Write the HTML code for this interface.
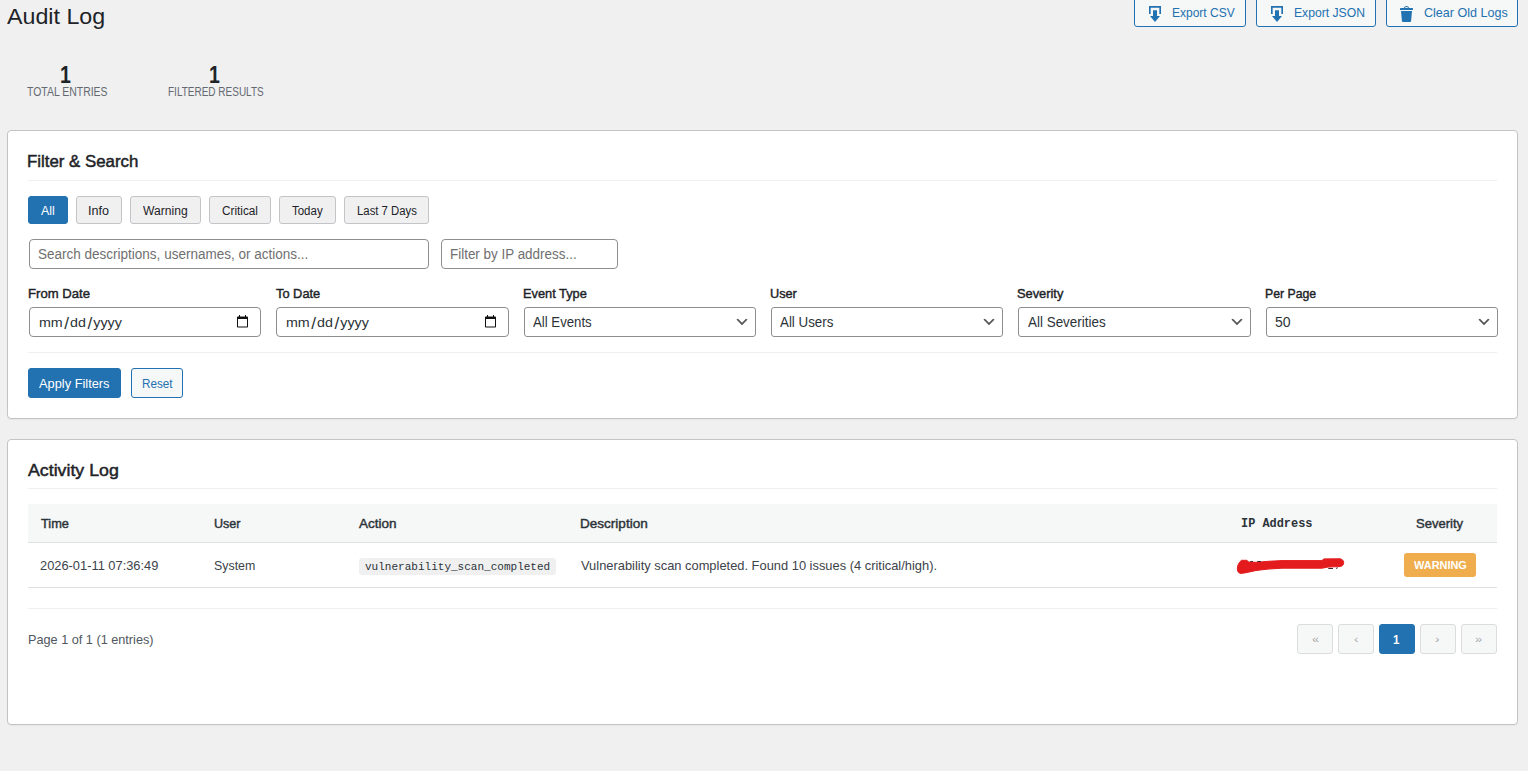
<!DOCTYPE html>
<html lang="en">
<head>
<meta charset="utf-8">
<title>Audit Log</title>
<style>
*{box-sizing:border-box;margin:0;padding:0}
html,body{width:1528px;height:771px;overflow:hidden;background:#f0f0f1}
body{font-family:'Liberation Sans',sans-serif;font-size:13px;color:#3c434a;position:relative}
a{text-decoration:none}
.abs,.t,.card,.hr,.btn,.qbtn,.inp,.pg,.thead,.row,.chip,.badge{position:absolute;display:block}
.t{white-space:pre;line-height:30px;height:30px;font-weight:400;font-style:normal;font-family:'Liberation Sans',sans-serif;transform-origin:0 50%}
.t i.sl{font-style:normal;font-size:16px;line-height:10px;position:relative;top:1.8px;margin:0 1px 0 1.4px}
.t.m{font-family:'Liberation Mono',monospace}
.ic{display:block;fill:#2271b1}
.card{background:#fff;border:1px solid #c3c4c7;border-radius:4px;box-shadow:0 1px 1px rgba(0,0,0,.04)}
.hr{background:#f0f0f1}
.btn{border:1px solid #2271b1;border-radius:3px}
.btn.pri{background:#2271b1}
.btn.sec{background:#f6f7f7}
.qbtn{border:1px solid #c3c4c7;border-radius:3px;background:#f0f0f1}
.qbtn.on{background:#2271b1;border-color:#2271b1}
.inp{border:1px solid #8c8e91;border-radius:4px;background:#fff}
.inp.sel{border-radius:3px}
.thead{background:#f6f7f7;border-bottom:1px solid #dfe0e1}
.row{border-bottom:1px solid #dfe0e1}
.chip{background:#f0f0f1;border-radius:3px}
.badge{background:#f0ad4e;border-radius:3px}
.pg{border:1px solid #dcdcde;border-radius:3px;background:#f6f7f7}
.pg.cur{background:#2271b1;border-color:#2271b1}
</style>
</head>
<body>
<h1 class="t" style="left:7.45px;top:1.70px;font-size:22px;color:#1d2327;transform:scaleX(1.0564)">Audit Log</h1>
<div class="abs" style="left:1134px;top:-3px;width:384px;height:30px;">
  <a class="btn sec" style="left:0px;top:0px;width:112px;height:30px;">
    <span class="abs" style="left:10px;top:6px"><svg class="ic" viewBox="0 0 20 20" width="20" height="20"><path d="M14.35 3.650V10H16V2H4v8h1.650V3.650h8.700zM12 6.150V12h3l-5 6-5-6h3V6.150h4z"/></svg></span>
    <span class="t" style="left:37.05px;top:0.30px;font-size:13px;color:#2271b1;transform:scaleX(0.9234)">Export CSV</span>
  </a>
  <a class="btn sec" style="left:122px;top:0px;width:120px;height:30px;">
    <span class="abs" style="left:10px;top:6px"><svg class="ic" viewBox="0 0 20 20" width="20" height="20"><path d="M14.35 3.650V10H16V2H4v8h1.650V3.650h8.700zM12 6.150V12h3l-5 6-5-6h3V6.150h4z"/></svg></span>
    <span class="t" style="left:36.54px;top:0.30px;font-size:13px;color:#2271b1;transform:scaleX(0.9355)">Export JSON</span>
  </a>
  <a class="btn sec" style="left:252px;top:0px;width:132px;height:30px;">
    <span class="abs" style="left:10px;top:6px"><svg class="ic" viewBox="0 0 20 20" width="20" height="20"><path d="M12 4h3c.6 0 1 .4 1 1v1H3V5c0-.6.5-1 1-1h3c.2-1.100 1.300-2 2.500-2s2.300.9 2.500 2zM8 4h3c-.2-.6-.9-1-1.500-1S8.200 3.400 8 4zM4 7h11l-.9 10.100c0 .5-.5.9-1 .9H5.900c-.5 0-.9-.4-1-.9L4 7z"/></svg></span>
    <span class="t" style="left:36.68px;top:0.30px;font-size:13px;color:#2271b1;transform:scaleX(0.9647)">Clear Old Logs</span>
  </a>
</div>
<div class="abs" style="left:27px;top:62px;width:81px;height:40px;">
  <b class="t" style="left:33.22px;top:-2.30px;font-size:23px;font-weight:700;color:#1d2327;transform:scaleX(0.8488)">1</b>
  <span class="t" style="left:0.05px;top:15.20px;font-size:12px;color:#646970;transform:scaleX(0.8712)">TOTAL ENTRIES</span>
</div>
<div class="abs" style="left:167px;top:62px;width:97px;height:40px;">
  <b class="t" style="left:41.52px;top:-2.30px;font-size:23px;font-weight:700;color:#1d2327;transform:scaleX(0.8488)">1</b>
  <span class="t" style="left:0.78px;top:15.20px;font-size:12px;color:#646970;transform:scaleX(0.8326)">FILTERED RESULTS</span>
</div>
<div class="card" style="left:7px;top:130px;width:1511px;height:289px;">
  <h2 class="t" style="left:19.35px;top:16.20px;font-size:17px;-webkit-text-stroke:0.48px #1d2327;color:#1d2327;transform:scaleX(0.9904)">Filter &amp; Search</h2>
  <div class="hr" style="left:20px;top:49px;width:1469px;height:1px;">
  </div>
  <div class="abs" style="left:20px;top:65px;width:401px;height:28px;">
    <a class="qbtn on" style="left:0px;top:0px;width:40px;height:28px;">
      <span class="t" style="left:12.25px;top:-1.20px;font-size:12px;color:#fff;transform:scaleX(1.0343)">All</span>
    </a>
    <a class="qbtn" style="left:48.2px;top:0px;width:45.7px;height:28px;">
      <span class="t" style="left:11.18px;top:-1.20px;font-size:12px;color:#1d2327;transform:scaleX(1.0482)">Info</span>
    </a>
    <a class="qbtn" style="left:102.2px;top:0px;width:70.5px;height:28px;">
      <span class="t" style="left:12.30px;top:-1.20px;font-size:12px;color:#1d2327;transform:scaleX(1.0087)">Warning</span>
    </a>
    <a class="qbtn" style="left:181px;top:0px;width:61.5px;height:28px;">
      <span class="t" style="left:12.01px;top:-1.20px;font-size:12px;color:#1d2327;transform:scaleX(0.9815)">Critical</span>
    </a>
    <a class="qbtn" style="left:251.3px;top:0px;width:56.4px;height:28px;">
      <span class="t" style="left:12.04px;top:-1.20px;font-size:12px;color:#1d2327;transform:scaleX(0.9566)">Today</span>
    </a>
    <a class="qbtn" style="left:316.3px;top:0px;width:84.5px;height:28px;">
      <span class="t" style="left:11.38px;top:-1.20px;font-size:12px;color:#1d2327;transform:scaleX(0.9461)">Last 7 Days</span>
    </a>
  </div>
  <div class="inp" style="left:21px;top:108px;width:400px;height:30px;">
    <span class="t" style="left:7.82px;top:-1.00px;font-size:14px;color:#6f6f6f;transform:scaleX(0.9648)">Search descriptions, usernames, or actions...</span>
  </div>
  <div class="inp" style="left:433px;top:108px;width:177px;height:30px;">
    <span class="t" style="left:7.76px;top:-1.00px;font-size:14px;color:#6f6f6f;transform:scaleX(0.9591)">Filter by IP address...</span>
  </div>
  <label class="t" style="left:19.75px;top:148.10px;font-size:13px;-webkit-text-stroke:0.42px #1d2327;color:#1d2327;transform:scaleX(1.0086)">From Date</label>
  <label class="t" style="left:268.30px;top:148.10px;font-size:13px;-webkit-text-stroke:0.42px #1d2327;color:#1d2327;transform:scaleX(0.9873)">To Date</label>
  <label class="t" style="left:514.77px;top:148.10px;font-size:13px;-webkit-text-stroke:0.42px #1d2327;color:#1d2327;transform:scaleX(0.9840)">Event Type</label>
  <label class="t" style="left:761.82px;top:148.10px;font-size:13px;-webkit-text-stroke:0.42px #1d2327;color:#1d2327;transform:scaleX(0.9782)">User</label>
  <label class="t" style="left:1009.18px;top:148.10px;font-size:13px;-webkit-text-stroke:0.42px #1d2327;color:#1d2327;transform:scaleX(0.9869)">Severity</label>
  <label class="t" style="left:1256.70px;top:148.10px;font-size:13px;-webkit-text-stroke:0.42px #1d2327;color:#1d2327;transform:scaleX(0.9443)">Per Page</label>
  <div class="inp" style="left:21px;top:176px;width:232px;height:30px;">
    <span class="t" style="left:8.91px;top:0.00px;font-size:13.3px;color:#2c3338;transform:scaleX(1.0719)">mm<i class="sl">/</i>dd<i class="sl">/</i>yyyy</span>
    <svg class="abs" style="left:206.4px;top:6.2px" viewBox="0 0 13 15" width="13" height="15"><path fill="#111" d="M3 1h1v1.500h5V1h1v1.500h1c.55 0 1 .45 1 1v9c0 .55-.45 1-1 1H2c-.55 0-1-.45-1-1v-9c0-.55.45-1 1-1h1V1zm8 4.100H2v7.400h9V5.100z"/></svg>
  </div>
  <div class="inp" style="left:268px;top:176px;width:233px;height:30px;">
    <span class="t" style="left:9.21px;top:0.00px;font-size:13.3px;color:#2c3338;transform:scaleX(1.0719)">mm<i class="sl">/</i>dd<i class="sl">/</i>yyyy</span>
    <svg class="abs" style="left:207.4px;top:6.2px" viewBox="0 0 13 15" width="13" height="15"><path fill="#111" d="M3 1h1v1.500h5V1h1v1.500h1c.55 0 1 .45 1 1v9c0 .55-.45 1-1 1H2c-.55 0-1-.45-1-1v-9c0-.55.45-1 1-1h1V1zm8 4.100H2v7.400h9V5.100z"/></svg>
  </div>
  <div class="inp sel" style="left:516px;top:176px;width:232px;height:30px;">
    <span class="t" style="left:8.25px;top:-1.00px;font-size:14px;color:#2c3338;transform:scaleX(0.9426)">All Events</span>
    <svg class="abs" style="left:209px;top:5.6px" viewBox="0 0 20 20" width="16" height="16"><path fill="#555" d="M5 6l5 5 5-5 2 1-7 7-7-7 2-1z"/></svg>
  </div>
  <div class="inp sel" style="left:763px;top:176px;width:232px;height:30px;">
    <span class="t" style="left:8.25px;top:-1.00px;font-size:14px;color:#2c3338;transform:scaleX(0.9530)">All Users</span>
    <svg class="abs" style="left:209px;top:5.6px" viewBox="0 0 20 20" width="16" height="16"><path fill="#555" d="M5 6l5 5 5-5 2 1-7 7-7-7 2-1z"/></svg>
  </div>
  <div class="inp sel" style="left:1010px;top:176px;width:233px;height:30px;">
    <span class="t" style="left:8.85px;top:-1.00px;font-size:14px;color:#2c3338;transform:scaleX(0.9602)">All Severities</span>
    <svg class="abs" style="left:210px;top:5.6px" viewBox="0 0 20 20" width="16" height="16"><path fill="#555" d="M5 6l5 5 5-5 2 1-7 7-7-7 2-1z"/></svg>
  </div>
  <div class="inp sel" style="left:1258px;top:176px;width:232px;height:30px;">
    <span class="t" style="left:7.72px;top:-1.00px;font-size:14px;color:#2c3338;transform:scaleX(1.0018)">50</span>
    <svg class="abs" style="left:209px;top:5.6px" viewBox="0 0 20 20" width="16" height="16"><path fill="#555" d="M5 6l5 5 5-5 2 1-7 7-7-7 2-1z"/></svg>
  </div>
  <div class="hr" style="left:20px;top:221px;width:1469px;height:1px;">
  </div>
  <a class="btn pri" style="left:20px;top:237px;width:93px;height:30px;">
    <span class="t" style="left:10.35px;top:0.00px;font-size:13px;color:#fff;transform:scaleX(0.9860)">Apply Filters</span>
  </a>
  <a class="btn sec" style="left:123px;top:237px;width:52px;height:30px;">
    <span class="t" style="left:9.67px;top:0.00px;font-size:13px;color:#2271b1;transform:scaleX(0.9016)">Reset</span>
  </a>
</div>
<div class="card" style="left:7px;top:439px;width:1511px;height:286px;">
  <h2 class="t" style="left:20.16px;top:16.10px;font-size:17px;-webkit-text-stroke:0.48px #1d2327;color:#1d2327;transform:scaleX(1.0443)">Activity Log</h2>
  <div class="hr" style="left:20px;top:48px;width:1469px;height:1px;">
  </div>
  <div class="thead" style="left:20px;top:64px;width:1469px;height:39px;">
    <span class="t" style="left:12.80px;top:4.80px;font-size:13px;-webkit-text-stroke:0.42px #2c3338;color:#2c3338;transform:scaleX(0.9850)">Time</span>
    <span class="t" style="left:185.72px;top:4.80px;font-size:13px;-webkit-text-stroke:0.42px #2c3338;color:#2c3338;transform:scaleX(0.9671)">User</span>
    <span class="t" style="left:330.83px;top:4.80px;font-size:13px;-webkit-text-stroke:0.42px #2c3338;color:#2c3338;transform:scaleX(1.0397)">Action</span>
    <span class="t" style="left:552.42px;top:4.80px;font-size:13px;-webkit-text-stroke:0.42px #2c3338;color:#2c3338;transform:scaleX(1.0414)">Description</span>
    <span class="t m" style="left:1212.99px;top:5.20px;font-size:12px;font-weight:700;color:#2c3338;transform:scaleX(0.9917)">IP Address</span>
    <span class="t" style="left:1387.98px;top:4.80px;font-size:13px;-webkit-text-stroke:0.42px #2c3338;color:#2c3338;transform:scaleX(1.0019)">Severity</span>
  </div>
  <div class="row" style="left:20px;top:103px;width:1469px;height:45px;">
    <span class="t" style="left:11.70px;top:8.00px;font-size:13px;color:#3c434a;transform:scaleX(0.9886)">2026-01-11 07:36:49</span>
    <span class="t" style="left:185.58px;top:8.00px;font-size:13px;color:#3c434a;transform:scaleX(0.9520)">System</span>
    <code class="chip" style="left:331px;top:14.5px;width:196.7px;height:17.2px;">
      <span class="t m" style="left:5.91px;top:-5.90px;font-size:11px;color:#2c3338;transform:scaleX(1.0021)">vulnerability_scan_completed</span>
    </code>
    <span class="t" style="left:553.12px;top:8.00px;font-size:13px;color:#3c434a;transform:scaleX(0.9907)">Vulnerability scan completed. Found 10 issues (4 critical/high).</span>
    <svg class="abs" style="left:1207px;top:10px" width="120" height="30" viewBox="1235 553 120 30"><path fill="#e41b1c" stroke="#e41b1c" stroke-width="1" stroke-linejoin="round" d="M1241.500 560.300L1246.700 560.300L1248.900 562.100L1256 562.300L1270 561.200L1282 560.600L1321.800 560.600L1324 558.900L1340 558.800C1342.500 559.300 1343.700 560.700 1343.700 562.600C1343.700 564.700 1342.500 566.100 1340.300 566.500L1328 567.100L1322 568.200L1282 568.200L1268 569.100L1256 570.500L1246 572.700L1241.200 573.400C1239.500 573.300 1238.300 572.600 1237.800 571.300C1237.300 569.900 1237.200 568.100 1237.600 566.200C1238.300 564 1239.600 561.900 1241.500 560.300Z"/><path fill="#40262a" d="M1250.300 561.100h2.600v.9h-2.600zM1257.300 561h3.600v.9h-3.600zM1328.300 567.900h4.700v1.100h-4.700zM1336 568.900l.9-1.700h1l-.9 1.700z"/></svg>
    <span class="badge" style="left:1376px;top:10px;width:72px;height:24px;">
      <span class="t" style="left:9.94px;top:-2.90px;font-size:11px;font-weight:700;color:#fff;transform:scaleX(0.9947)">WARNING</span>
    </span>
  </div>
  <div class="hr" style="left:20px;top:168px;width:1469px;height:1px;">
  </div>
  <span class="t" style="left:19.60px;top:184.80px;font-size:13px;color:#50575e;transform:scaleX(0.9757)">Page 1 of 1 (1 entries)</span>
  <div class="abs" style="left:1289px;top:184px;width:200px;height:30px;">
    <a class="pg" style="left:0px;top:0px;width:36px;height:30px;">
      <span class="t" style="left:13.69px;top:0.20px;font-size:10px;color:#a7aaad;transform:scaleX(1.2682)">«</span>
    </a>
    <a class="pg" style="left:41px;top:0px;width:36px;height:30px;">
      <span class="t" style="left:14.75px;top:0.20px;font-size:10px;color:#a7aaad;transform:scaleX(1.3191)">‹</span>
    </a>
    <a class="pg cur" style="left:82px;top:0px;width:36px;height:30px;">
      <span class="t" style="left:13.46px;top:0.10px;font-size:13px;font-weight:700;color:#fff;transform:scaleX(0.8901)">1</span>
    </a>
    <a class="pg" style="left:123px;top:0px;width:36px;height:30px;">
      <span class="t" style="left:14.37px;top:0.20px;font-size:10px;color:#a7aaad;transform:scaleX(1.3714)">›</span>
    </a>
    <a class="pg" style="left:164px;top:0px;width:36px;height:30px;">
      <span class="t" style="left:13.03px;top:0.20px;font-size:10px;color:#a7aaad;transform:scaleX(1.2905)">»</span>
    </a>
  </div>
</div>
</body>
</html>
